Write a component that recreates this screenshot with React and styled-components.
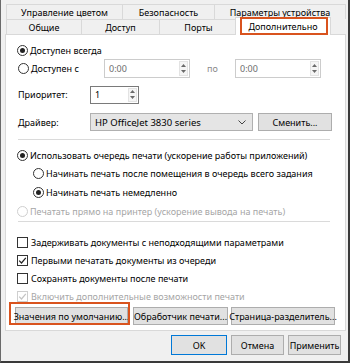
import React from 'react'
import styled, { createGlobalStyle, css } from 'styled-components'

const Global = createGlobalStyle`
  html, body { margin: 0; padding: 0; background: #f0f0f0; }
  body { font-family: "Noto Sans", "Open Sans", sans-serif; font-size: 9px; color: #000; }
`

const Window = styled.div`
  position: relative;
  width: 350px;
  height: 363px;
  box-sizing: border-box;
  background: #f0f0f0;
  border-left: 1px solid #6a6a6a;
  border-right: 2px solid #3a3a3a;
  border-bottom: 2px solid #3a3a3a;
  padding: 4px 2px 0 4px;
  display: flex;
  flex-direction: column;
`

const TabRow = styled.div`
  display: flex;
  height: 15px;
  margin-left: 2px;
  position: relative;
  z-index: ${p => (p.$front ? 2 : 1)};
`

const Tab = styled.div`
  position: relative;
  box-sizing: border-box;
  width: ${p => (p.$w ? `${p.$w}px` : 'auto')};
  flex: ${p => (p.$w ? 'none' : '1')};
  height: 15px;
  display: flex;
  align-items: center;
  justify-content: center;
  background: #f0f0f0;
  border: 1px solid #d9d9d9;
  border-bottom: none;
  margin-left: -1px;
  white-space: nowrap;
  ${p => p.$active && css`
    background: #fff;
    height: 18px;
    margin-top: -2px;
    margin-left: -3px;
    margin-right: -2px;
    padding-bottom: 1px;
  `}
`

const Highlight = styled.div`
  position: absolute;
  z-index: 5;
  border: 2px solid #d9531e;
  pointer-events: none;
  ${p => p.$tab && css`
    left: 239px;
    top: 17px;
    width: 84px;
    height: 14px;
  `}
  ${p => p.$btn && css`
    left: 8px;
    top: 302px;
    width: 117px;
    height: 19px;
  `}
`

const Panel = styled.div`
  position: relative;
  z-index: 1;
  background: #fff;
  border: 1px solid #d9d9d9;
  height: 297px;
  box-sizing: border-box;
  padding: 7px 10px 0 11px;
  display: flex;
  flex-direction: column;
`

const Row = styled.div`
  display: flex;
  align-items: center;
  height: ${p => p.$h || 18}px;
  margin-top: ${p => p.$mt || 0}px;
  padding-left: ${p => p.$indent || 0}px;
  color: ${p => (p.$disabled ? '#a6a6a6' : '#000')};
  white-space: nowrap;
`

const Label = styled.span`
  width: ${p => p.$w || 0}px;
  flex: none;
  padding-left: 1px;
  display: flex;
  align-items: center;
`

const RadioCircle = styled.span`
  width: 11px;
  height: 11px;
  box-sizing: border-box;
  border-radius: 50%;
  border: 1px solid ${p => (p.$disabled ? '#cfcfcf' : '#333')};
  background: #fff;
  display: inline-flex;
  align-items: center;
  justify-content: center;
  margin-right: 2px;
  flex: none;
  &::after {
    content: '';
    width: 5px;
    height: 5px;
    border-radius: 50%;
    background: ${p => (p.$checked ? '#222' : 'transparent')};
  }
`

const Box = styled.span`
  width: 11px;
  height: 11px;
  box-sizing: border-box;
  border: 1px solid ${p => (p.$disabled ? '#cfcfcf' : '#333')};
  background: #fff;
  display: inline-flex;
  align-items: center;
  justify-content: center;
  margin-right: 3px;
  flex: none;
`

const Separator = styled.div`
  height: 1px;
  background: #dadada;
  margin-top: ${p => p.$mt || 0}px;
  margin-right: 5px;
  margin-left: 1px;
`

const Field = styled.div`
  box-sizing: border-box;
  width: ${p => p.$w}px;
  height: ${p => p.$h || 19}px;
  border: 1px solid ${p => (p.$disabled ? '#cccccc' : '#7a7a7a')};
  background: #fff;
  display: flex;
  align-items: center;
  color: ${p => (p.$disabled ? '#6d6d6d' : '#000')};
  margin-left: ${p => p.$ml || 0}px;
  flex: none;
`

const FieldText = styled.span`
  flex: 1;
  padding-left: 4px;
`

const Spin = styled.div`
  width: 9px;
  height: calc(100% - 2px);
  margin-right: 1px;
  display: flex;
  flex-direction: column;
  border: 1px solid #e3e3e3;
  box-sizing: border-box;
  background: #f5f5f5;
`

const SpinHalf = styled.span`
  flex: 1;
  display: flex;
  align-items: center;
  justify-content: center;
`

const Mid = styled.span`
  width: 45px;
  text-align: center;
  color: #8a8a8a;
  flex: none;
`

const Combo = styled.div`
  box-sizing: border-box;
  width: 163px;
  height: 18px;
  border: 1px solid #b0b0b0;
  background: #e5e5e5;
  display: flex;
  align-items: center;
  padding: 0 6px 0 4px;
  font-size: 9.5px;
  justify-content: space-between;
  flex: none;
`

const Button = styled.div`
  box-sizing: border-box;
  width: ${p => p.$w}px;
  height: ${p => p.$h || 18}px;
  background: #e1e1e1;
  border: 1px solid ${p => (p.$default ? '#0078d7' : '#adadad')};
  display: flex;
  align-items: center;
  justify-content: center;
  white-space: nowrap;
  margin-left: ${p => p.$ml || 0}px;
  flex: none;
`

const ButtonRow = styled.div`
  display: flex;
  align-items: center;
  margin-top: ${p => p.$mt || 0}px;
  margin-left: ${p => p.$ml || 0}px;
  justify-content: ${p => (p.$end ? 'flex-end' : 'flex-start')};
  padding-right: ${p => p.$pr || 0}px;
`

const Tri = ({ down }) => (
  <svg width="5" height="3" viewBox="0 0 5 3">
    <polygon points={down ? '0,0 5,0 2.5,3' : '0,3 5,3 2.5,0'} fill="#6a6a6a" />
  </svg>
)

const SpinBox = ({ value, w, h, disabled, ml }) => (
  <Field $w={w} $h={h} $disabled={disabled} $ml={ml}>
    <FieldText>{value}</FieldText>
    <Spin>
      <SpinHalf><Tri /></SpinHalf>
      <SpinHalf><Tri down /></SpinHalf>
    </Spin>
  </Field>
)

const Radio = ({ checked, disabled, children }) => (
  <>
    <RadioCircle $checked={checked} $disabled={disabled} />
    <span>{children}</span>
  </>
)

const Check = ({ checked, disabled, children }) => (
  <>
    <Box $disabled={disabled}>
      {checked && (
        <svg width="9" height="9" viewBox="0 0 9 9">
          <polyline points="1.2,4.6 3.5,7 7.8,1.8" fill="none" stroke={disabled ? '#c4c4c4' : '#222'} strokeWidth="1.2" />
        </svg>
      )}
    </Box>
    <span>{children}</span>
  </>
)

export default function App() {
  return (
    <>
      <Global />
      <Window>
        <TabRow>
          <Tab $w={117}>Управление цветом</Tab>
          <Tab $w={93}>Безопасность</Tab>
          <Tab>Параметры устройства</Tab>
        </TabRow>
        <TabRow $front>
          <Tab $w={76}>Общие</Tab>
          <Tab $w={79}>Доступ</Tab>
          <Tab $w={79}>Порты</Tab>
          <Tab $w={96} $active>Дополнительно</Tab>
        </TabRow>
        <Panel>
          <Row $h={17}><Radio checked>Доступен всегда</Radio></Row>
          <Row $h={19}>
            <Label $w={86}><Radio>Доступен с</Radio></Label>
            <SpinBox value="0:00" w={86} disabled />
            <Mid>по</Mid>
            <SpinBox value="0:00" w={86} disabled />
          </Row>
          <Row $h={19} $mt={7}>
            <Label $w={72}>Приоритет:</Label>
            <SpinBox value="1" w={49} h={18} />
          </Row>
          <Row $mt={9}>
            <Label $w={72}>Драйвер:</Label>
            <Combo>
              <span>HP OfficeJet 3830 series</span>
              <svg width="8" height="5" viewBox="0 0 8 5">
                <polyline points="0.5,0.5 4,4 7.5,0.5" fill="none" stroke="#444" strokeWidth="1" />
              </svg>
            </Combo>
            <Button $w={74} $ml={5}>Сменить...</Button>
          </Row>
          <Separator $mt={8} />
          <Row $mt={6}><Radio checked>Использовать очередь печати (ускорение работы приложений)</Radio></Row>
          <Row $indent={16}><Radio>Начинать печать после помещения в очередь всего задания</Radio></Row>
          <Row $indent={16} $mt={1}><Radio checked>Начинать печать немедленно</Radio></Row>
          <Row $mt={1} $disabled><Radio disabled>Печатать прямо на принтер (ускорение вывода на печать)</Radio></Row>
          <Separator $mt={1} />
          <Row $mt={11}><Check>Задерживать документы с неподходящими параметрами</Check></Row>
          <Row><Check checked>Первыми печатать документы из очереди</Check></Row>
          <Row><Check>Сохранять документы после печати</Check></Row>
          <Row $disabled><Check checked disabled>Включить дополнительные возможности печати</Check></Row>
          <ButtonRow $ml={-2} $mt={2}>
            <Button $w={113}>Значения по умолчанию...</Button>
            <Button $w={95} $ml={5}>Обработчик печати...</Button>
            <Button $w={104} $ml={3}>Страница-разделитель...</Button>
          </ButtonRow>
        </Panel>
        <ButtonRow $mt={4} $end $pr={5}>
          <Button $w={56} $h={20} $default>OK</Button>
          <Button $w={53} $h={20} $ml={4}>Отмена</Button>
          <Button $w={53} $h={20} $ml={4}>Применить</Button>
        </ButtonRow>
        <Highlight $tab />
        <Highlight $btn />
      </Window>
    </>
  )
}
